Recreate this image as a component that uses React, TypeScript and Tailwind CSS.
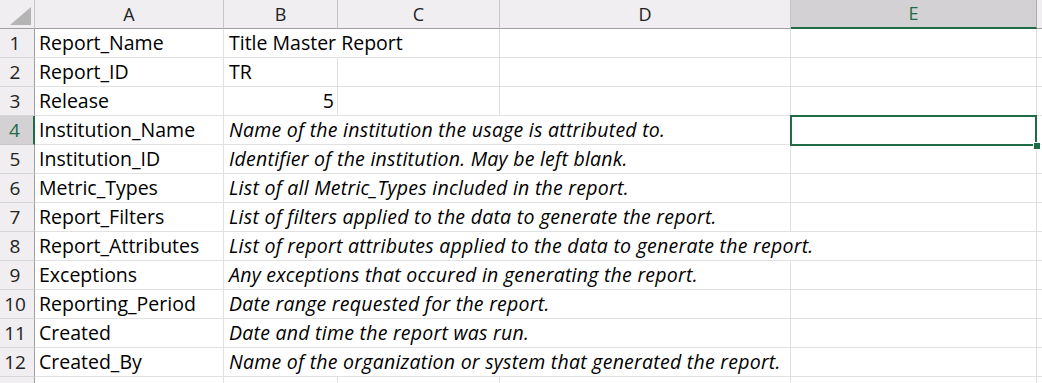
import React from "react"

const font = { fontFamily: "'Open Sans', Lato, sans-serif" }

type Row = {
  a: string
  b?: string
  bRight?: boolean
  span?: "bc" | "bcd" | "bcde"
  italic?: boolean
}

const rows: Row[] = [
  { a: "Report_Name", b: "Title Master Report", span: "bc" },
  { a: "Report_ID", b: "TR" },
  { a: "Release", b: "5", bRight: true },
  { a: "Institution_Name", b: "Name of the institution the usage is attributed to.", span: "bcd", italic: true },
  { a: "Institution_ID", b: "Identifier of the institution. May be left blank.", span: "bcd", italic: true },
  { a: "Metric_Types", b: "List of all Metric_Types included in the report.", span: "bcd", italic: true },
  { a: "Report_Filters", b: "List of filters applied to the data to generate the report.", span: "bcd", italic: true },
  { a: "Report_Attributes", b: "List of report attributes applied to the data to generate the report.", span: "bcde", italic: true },
  { a: "Exceptions", b: "Any exceptions that occured in generating the report.", span: "bcd", italic: true },
  { a: "Reporting_Period", b: "Date range requested for the report.", span: "bcd", italic: true },
  { a: "Created", b: "Date and time the report was run.", span: "bcd", italic: true },
  { a: "Created_By", b: "Name of the organization or system that generated the report.", span: "bcd", italic: true },
]

const cell = "h-[29px] shrink-0 border-r border-b border-[#e1e1e1] bg-white flex items-end pb-[1px] whitespace-nowrap leading-[26px]"

function ColHead({ label, w, active }: { label: string; w: string; active?: boolean }) {
  return (
    <div
      className={`${w} h-[29px] shrink-0 flex items-center justify-center border-r ${
        active
          ? "bg-[#d3d1d3] border-[#ababab] border-b-2 border-b-[#1e6b45] text-[#1e6b45]"
          : "bg-[#f0eef0] border-[#c6c6c6] border-b border-b-[#9f9f9f] text-[#222]"
      } text-[18px]`}
    >
      {label}
    </div>
  )
}

function RowHead({ n, active }: { n: number; active?: boolean }) {
  return (
    <div
      className={`w-[35px] h-[29px] shrink-0 flex items-center justify-center pr-[4px] border-b ${
        active
          ? "bg-[#d3d1d3] border-b-[#c6c6c6] border-r-2 border-r-[#1e6b45] text-[#1e6b45]"
          : "bg-[#f0eef0] border-b-[#d6d6d6] border-r border-r-[#9f9f9f] text-[#222]"
      } text-[19px]`}
    >
      {n}
    </div>
  )
}

export default function App() {
  return (
    <div className="w-[1042px] h-[383px] overflow-hidden bg-white text-black" style={font}>
      <div className="flex">
        <div className="w-[35px] h-[29px] shrink-0 bg-[#f0eef0] border-r border-b border-r-[#c6c6c6] border-b-[#9f9f9f] flex items-end justify-end pr-[3px] pb-[3px]">
          <svg width="21" height="18" viewBox="0 0 21 18">
            <polygon points="21,0 21,18 0,18" fill="#b4b4b4" />
          </svg>
        </div>
        <ColHead label="A" w="w-[189px]" />
        <ColHead label="B" w="w-[114px]" />
        <ColHead label="C" w="w-[162px]" />
        <ColHead label="D" w="w-[291px]" />
        <ColHead label="E" w="w-[246px]" active />
        <ColHead label="" w="w-[10px]" />
      </div>

      {rows.map((r, i) => {
        const n = i + 1
        const tx = `text-[19.5px] ${r.italic ? "italic tracking-[0.25px]" : ""}`
        return (
          <div key={n} className="flex">
            <RowHead n={n} active={n === 4} />
            <div className={`${cell} w-[189px] pl-[4px] text-[19.5px]`}>{r.a}</div>
            {r.span === "bcde" && (
              <div className={`${cell} w-[813px] pl-[5px] ${tx}`}>{r.b}</div>
            )}
            {r.span === "bcd" && (
              <div className={`${cell} w-[567px] pl-[5px] ${tx}`}>{r.b}</div>
            )}
            {r.span === "bc" && (
              <>
                <div className={`${cell} w-[276px] pl-[5px] ${tx}`}>{r.b}</div>
                <div className={`${cell} w-[291px]`} />
              </>
            )}
            {!r.span && (
              <>
                <div className={`${cell} w-[114px] ${r.bRight ? "justify-end pr-[3px]" : "pl-[5px]"} ${tx}`}>{r.b}</div>
                <div className={`${cell} w-[162px]`} />
                <div className={`${cell} w-[291px]`} />
              </>
            )}
            {r.span !== "bcde" && (
              <div className={`${cell} w-[246px] relative ${n === 4 ? "z-10" : ""}`}>
                {n === 4 && (
                  <div className="absolute left-[-1px] top-[-1px] w-[247px] h-[31px] shadow-[inset_0_0_0_2px_#1e6b45]">
                    <div className="absolute right-[-4px] bottom-[-4px] w-[8px] h-[8px] bg-[#1e6b45] border border-white" />
                  </div>
                )}
              </div>
            )}
            <div className={`${cell} w-[10px]`} />
          </div>
        )
      })}
      <div className="flex">
        <div className="w-[35px] h-[29px] shrink-0 bg-[#f0eef0] border-r border-[#9f9f9f]" />
        <div className="w-[189px] h-[29px] shrink-0 border-r border-[#e1e1e1]" />
        <div className="w-[114px] h-[29px] shrink-0 border-r border-[#e1e1e1]" />
        <div className="w-[162px] h-[29px] shrink-0 border-r border-[#e1e1e1]" />
        <div className="w-[291px] h-[29px] shrink-0 border-r border-[#e1e1e1]" />
        <div className="w-[246px] h-[29px] shrink-0 border-r border-[#e1e1e1]" />
      </div>
    </div>
  )
}
